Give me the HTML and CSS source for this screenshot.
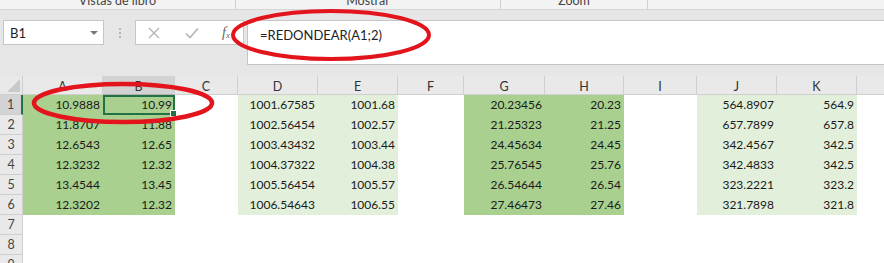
FILE: index.html
```html
<!DOCTYPE html>
<html lang="es">
<head>
<meta charset="utf-8">
<title>Excel REDONDEAR</title>
<link rel="stylesheet" href="styles.css">
</head>
<body>
<div class="app">
  <div class="ribbon">
    <div class="rgroup g1"><span>Vistas de libro</span></div>
    <div class="rgroup g2"><span>Mostrar</span></div>
    <div class="rgroup g3"><span>Zoom</span></div>
    <div class="rgroup g4"></div>
  </div>

  <div class="fbar">
    <div class="namebox">
      <span class="nb-text">B1</span>
      <span class="nb-arrow"></span>
    </div>
    <div class="grip"><i></i><i></i><i></i></div>
    <div class="fbtns">
      <svg class="ic ic-x" width="12" height="12" viewBox="0 0 12 12"><path d="M1 1L11 11M11 1L1 11" stroke="#b4b4b4" stroke-width="1.3" fill="none"/></svg>
      <svg class="ic ic-ok" width="14" height="12" viewBox="0 0 14 12"><path d="M1 6.5L5 10.5L13 1.5" stroke="#b4b4b4" stroke-width="1.6" fill="none"/></svg>
      <span class="fx">f<sub>x</sub></span>
    </div>
    <div class="finput">=REDONDEAR(A1;2)</div>
  </div>

  <div class="sheet">
    <div class="hdr corner"><span class="tri"></span></div>
    <div class="hdr col">A</div>
    <div class="hdr col sel">B</div>
    <div class="hdr col">C</div>
    <div class="hdr col">D</div>
    <div class="hdr col">E</div>
    <div class="hdr col">F</div>
    <div class="hdr col">G</div>
    <div class="hdr col">H</div>
    <div class="hdr col">I</div>
    <div class="hdr col">J</div>
    <div class="hdr col">K</div>
    <div class="hdr col last"></div>

    <div class="hdr row selr">1</div>
    <div class="c dk">10.9888</div><div class="c dk active">10.99<span class="handle"></span></div><div class="c"></div>
    <div class="c lt">1001.67585</div><div class="c lt">1001.68</div><div class="c"></div>
    <div class="c dk">20.23456</div><div class="c dk">20.23</div><div class="c"></div>
    <div class="c lt">564.8907</div><div class="c lt">564.9</div><div class="c"></div>

    <div class="hdr row">2</div>
    <div class="c dk">11.8707</div><div class="c dk">11.88</div><div class="c"></div>
    <div class="c lt">1002.56454</div><div class="c lt">1002.57</div><div class="c"></div>
    <div class="c dk">21.25323</div><div class="c dk">21.25</div><div class="c"></div>
    <div class="c lt">657.7899</div><div class="c lt">657.8</div><div class="c"></div>

    <div class="hdr row">3</div>
    <div class="c dk">12.6543</div><div class="c dk">12.65</div><div class="c"></div>
    <div class="c lt">1003.43432</div><div class="c lt">1003.44</div><div class="c"></div>
    <div class="c dk">24.45634</div><div class="c dk">24.45</div><div class="c"></div>
    <div class="c lt">342.4567</div><div class="c lt">342.5</div><div class="c"></div>

    <div class="hdr row">4</div>
    <div class="c dk">12.3232</div><div class="c dk">12.32</div><div class="c"></div>
    <div class="c lt">1004.37322</div><div class="c lt">1004.38</div><div class="c"></div>
    <div class="c dk">25.76545</div><div class="c dk">25.76</div><div class="c"></div>
    <div class="c lt">342.4833</div><div class="c lt">342.5</div><div class="c"></div>

    <div class="hdr row">5</div>
    <div class="c dk">13.4544</div><div class="c dk">13.45</div><div class="c"></div>
    <div class="c lt">1005.56454</div><div class="c lt">1005.57</div><div class="c"></div>
    <div class="c dk">26.54644</div><div class="c dk">26.54</div><div class="c"></div>
    <div class="c lt">323.2221</div><div class="c lt">323.2</div><div class="c"></div>

    <div class="hdr row">6</div>
    <div class="c dk">12.3202</div><div class="c dk">12.32</div><div class="c"></div>
    <div class="c lt">1006.54643</div><div class="c lt">1006.55</div><div class="c"></div>
    <div class="c dk">27.46473</div><div class="c dk">27.46</div><div class="c"></div>
    <div class="c lt">321.7898</div><div class="c lt">321.8</div><div class="c"></div>

    <div class="hdr row">7</div>
    <div class="c"></div><div class="c"></div><div class="c"></div><div class="c"></div><div class="c"></div><div class="c"></div>
    <div class="c"></div><div class="c"></div><div class="c"></div><div class="c"></div><div class="c"></div><div class="c"></div>

    <div class="hdr row">8</div>
    <div class="c"></div><div class="c"></div><div class="c"></div><div class="c"></div><div class="c"></div><div class="c"></div>
    <div class="c"></div><div class="c"></div><div class="c"></div><div class="c"></div><div class="c"></div><div class="c"></div>

    <div class="hdr row">9</div>
    <div class="c"></div><div class="c"></div><div class="c"></div><div class="c"></div><div class="c"></div><div class="c"></div>
    <div class="c"></div><div class="c"></div><div class="c"></div><div class="c"></div><div class="c"></div><div class="c"></div>
  </div>

  <svg class="marks" width="884" height="263" viewBox="0 0 884 263">
    <ellipse cx="331" cy="35" rx="98" ry="24" fill="none" stroke="#e3141c" stroke-width="4"/>
    <ellipse cx="123" cy="103" rx="89" ry="19" fill="none" stroke="#e3141c" stroke-width="4.5"/>
  </svg>
</div>
</body>
</html>
```

FILE: styles.css
```css
html, body {
  margin: 0;
  padding: 0;
  overflow: hidden;
}
body {
  width: 884px;
  height: 263px;
  background: #e6e6e6;
  font-family: Lato, "Open Sans", sans-serif;
  color: #1e1e1e;
}
.app {
  position: relative;
  width: 884px;
  height: 263px;
  overflow: hidden;
}

/* ribbon strip */
.ribbon {
  display: flex;
  height: 9px;
  background: #f3f3f3;
  border-bottom: 1px solid #d5d5d5;
  overflow: hidden;
}
.rgroup {
  display: flex;
  justify-content: center;
  border-right: 1px solid #d0d0d0;
  height: 9px;
  overflow: hidden;
}
.rgroup span {
  display: block;
  font-size: 12.5px;
  line-height: 14px;
  margin-top: -6px;
  color: #444;
}
.g1 { width: 235px; }
.g2 { width: 264px; }
.g3 { width: 146px; }
.g4 { flex: 1; border-right: none; }

/* formula bar */
.fbar {
  display: flex;
  align-items: flex-start;
  padding: 10px 0 0 3px;
  height: 45px;
}
.namebox {
  box-sizing: border-box;
  width: 101px;
  height: 25px;
  background: #fff;
  border: 1px solid #c6c6c6;
  display: flex;
  align-items: center;
  justify-content: space-between;
  padding: 0 5px 0 6px;
}
.nb-text {
  font-size: 13px;
  color: #222;
}
.nb-arrow {
  width: 0;
  height: 0;
  border-left: 4px solid transparent;
  border-right: 4px solid transparent;
  border-top: 4px solid #7a7a7a;
}
.grip {
  width: 31px;
  height: 25px;
  display: flex;
  flex-direction: column;
  align-items: center;
  justify-content: center;
  gap: 2px;
}
.grip i {
  display: block;
  width: 2px;
  height: 2px;
  background: #b8b8b8;
}
.fbtns {
  box-sizing: border-box;
  width: 109px;
  height: 25px;
  background: #fff;
  border: 1px solid #c6c6c6;
  display: flex;
  align-items: center;
  padding-left: 12px;
}
.ic-x { margin-right: 25px; }
.ic-ok { margin-right: 23px; }
.fx {
  font-family: "Liberation Serif", serif;
  font-style: italic;
  font-size: 14px;
  color: #666;
}
.fx sub {
  font-size: 9px;
  vertical-align: -1px;
}
.finput {
  box-sizing: border-box;
  margin-left: 3px;
  flex: 1;
  height: 45px;
  background: #fff;
  border-top: 1px solid #c6c6c6;
  border-bottom: 1px solid #c6c6c6;
  border-left: 1px solid #c6c6c6;
  padding: 6px 0 0 12px;
  font-size: 13px;
  color: #222;
}

/* sheet grid */
.sheet {
  margin-top: 11px;
  display: grid;
  grid-template-columns: 23px 80px 72px 63px 80px 80px 66px 81px 79px 73px 80px 80px 27px;
  grid-template-rows: 19px repeat(9, 20px);
  background: #fff;
}
.hdr {
  box-sizing: border-box;
  background: #e9e9e9;
  font-size: 12.5px;
  color: #333;
  display: flex;
  align-items: center;
  justify-content: center;
}
.hdr.col {
  border-right: 1px solid #cfcfcf;
  border-bottom: 1px solid #cfcfcf;
  padding-top: 2px;
}
.hdr.col.last { border-right: none; }
.hdr.col.sel {
  background: #d3d3d3;
  border-bottom: 1px solid #b0b0b0;
}
.hdr.corner {
  border-right: 1px solid #cfcfcf;
  border-bottom: 1px solid #cfcfcf;
  justify-content: flex-end;
  align-items: flex-end;
  padding: 0 2px 2px 0;
}
.tri {
  width: 0;
  height: 0;
  border-left: 13px solid transparent;
  border-bottom: 13px solid #c9c9c9;
}
.hdr.row {
  border-right: 1px solid #cfcfcf;
  border-bottom: 1px solid #cfcfcf;
  color: #444;
}
.hdr.row.selr {
  background: #d3d3d3;
  border-right: 2px solid #217346;
}
.c {
  box-sizing: border-box;
  font-size: 12px;
  text-align: right;
  padding-right: 3px;
  line-height: 20px;
  color: #1a1a1a;
  white-space: nowrap;
}
.c.dk { background: #a9d08e; }
.c.lt { background: #e2efda; }
.c.active {
  position: relative;
  border: 2px solid #217346;
  line-height: 16px;
  padding-right: 1px;
}
.handle {
  position: absolute;
  right: -4px;
  bottom: -4px;
  width: 5px;
  height: 5px;
  background: #217346;
  border: 1px solid #fff;
}

/* red annotation marks */
.marks {
  position: absolute;
  left: 0;
  top: 0;
  pointer-events: none;
}
```
